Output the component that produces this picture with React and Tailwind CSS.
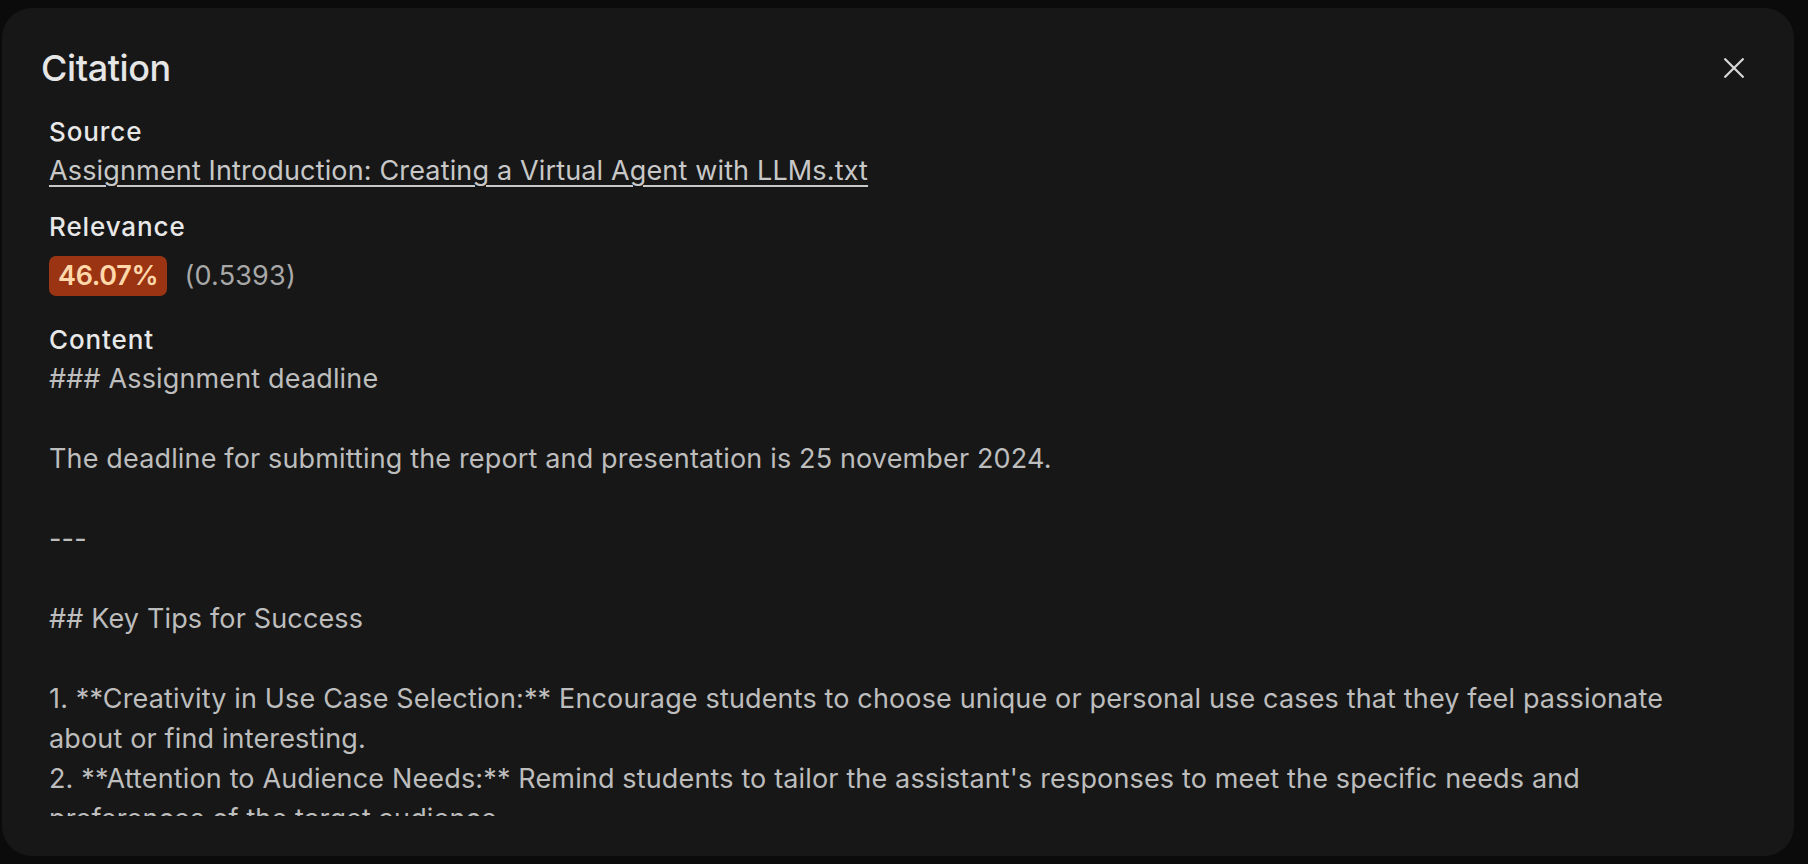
import React from "react";

const body = `### Assignment deadline

The deadline for submitting the report and presentation is 25 november 2024.

---

## Key Tips for Success

1. **Creativity in Use Case Selection:** Encourage students to choose unique or personal use cases that they feel passionate about or find interesting.
2. **Attention to Audience Needs:** Remind students to tailor the assistant's responses to meet the specific needs and preferences of the target audience.
3. **Iterative Improvement:** Suggest that students test and refine their prompts multiple times.`;

export default function App() {
  return (
    <div
      className="w-[1808px] h-[864px] bg-[#0b0b0b] pt-[8px] pl-[2px] overflow-hidden"
      style={{ fontFamily: "Inter, 'Noto Sans', sans-serif" }}
    >
      <div className="w-[1792px] h-[848px] bg-[#171717] rounded-[30px] flex flex-col overflow-hidden">
        <div className="flex items-center justify-between pt-[38px] pl-[39px] pr-[40px]">
          <h2 className="text-[36px] leading-[44px] font-medium text-[#e6e6e6] tracking-[-0.4px]">
            Citation
          </h2>
          <button className="w-[40px] h-[40px] flex items-center justify-center text-[#d6d6d6]">
            <svg width="20" height="20" viewBox="0 0 20 20" fill="none">
              <path
                d="M1.2 1.2 L18.8 18.8 M18.8 1.2 L1.2 18.8"
                stroke="currentColor"
                strokeWidth="2.3"
                strokeLinecap="round"
              />
            </svg>
          </button>
        </div>

        <div className="pl-[47px] pt-[24px] flex flex-col">
          <div className="text-[26px] leading-[36px] font-medium tracking-[0.9px] text-[#e8e8e8]">
            Source
          </div>
          <div className="mt-[1px] text-[27px] leading-[40px] tracking-[0.15px] text-[#c8c8c8]">
            <span className="underline underline-offset-[5px] decoration-[1.5px]">
              Assignment Introduction: Creating a Virtual Agent with LLMs.txt
            </span>
          </div>

          <div className="mt-[18px] text-[26px] leading-[36px] font-medium tracking-[0.9px] text-[#e8e8e8]">
            Relevance
          </div>
          <div className="mt-[11px] flex items-center gap-[17px]">
            <span className="h-[40px] px-[9px] rounded-[7px] bg-[#9a3412] text-[#fed7aa] text-[27px] leading-[40px] font-semibold tracking-[-0.3px]">
              46.07%
            </span>
            <span className="text-[27px] leading-[40px] tracking-[0.2px] text-[#a8a8a8]">(0.5393)</span>
          </div>

          <div className="mt-[26px] text-[26px] leading-[36px] font-medium tracking-[0.9px] text-[#e8e8e8]">
            Content
          </div>
          <div className="mt-[1px] h-[457px] overflow-hidden w-[1650px]">
            <div className="whitespace-pre-wrap text-[27px] leading-[40px] tracking-[0.15px] text-[#bdbdbd]">
              {body}
            </div>
          </div>
        </div>
      </div>
    </div>
  );
}
